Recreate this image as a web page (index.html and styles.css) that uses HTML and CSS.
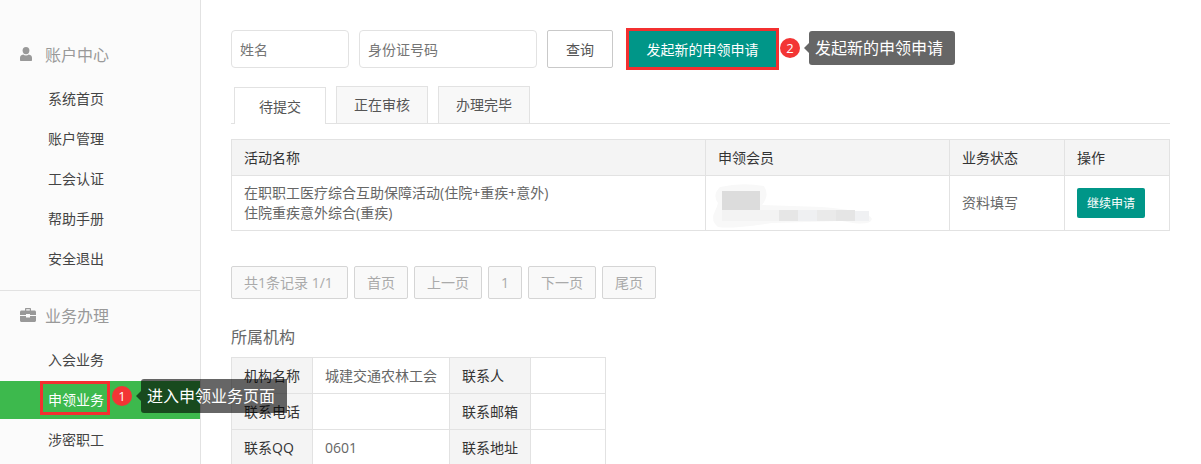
FILE: index.html
```html
<!DOCTYPE html>
<html lang="en">
<head>
    <meta charset="UTF-8">
    <title>申领业务</title>
    <link rel="stylesheet" href="styles.css">
</head>
<body>
    <div class="page">
        <!-- Sidebar -->
        <aside class="sidebar">
            <section class="side-group">
                <h3 class="side-title">
                    <svg class="side-icon icon-user" viewBox="0 0 12 14"><ellipse cx="6" cy="3.600" rx="3.400" ry="3.600"/><path d="M1 14c-.7 0-1-.4-1-1v-2.300C0 9 1.400 8.100 3.200 7.600 4.500 8.800 7.500 8.800 8.800 7.600 10.600 8.100 12 9 12 10.700V13c0 .6-.3 1-1 1z"/></svg>
                    账户中心
                </h3>
                <ul class="side-list">
                    <li>系统首页</li>
                    <li>账户管理</li>
                    <li>工会认证</li>
                    <li>帮助手册</li>
                    <li>安全退出</li>
                </ul>
            </section>
            <section class="side-group second">
                <h3 class="side-title">
                    <svg class="side-icon icon-case" viewBox="0 0 16 14"><path d="M5 2.500V1c0-.6.400-1 1-1h4c.6 0 1 .4 1 1v1.500h3.500c.8 0 1.500.7 1.500 1.500v3H10V6H6v1H0V4c0-.8.700-1.500 1.500-1.500zm1.200 0h3.600V1.200H6.200zM0 8h6v1.500h4V8h6v4.500c0 .8-.7 1.500-1.500 1.500h-13C.7 14 0 13.300 0 12.500z"/></svg>
                    业务办理
                </h3>
                <ul class="side-list">
                    <li>入会业务</li>
                    <li class="active">
                        <span class="marked">申领业务</span>
                        <span class="badge badge-one">1</span>
                        <span class="tip tip-one">进入申领业务页面</span>
                    </li>
                    <li>涉密职工</li>
                </ul>
            </section>
        </aside>

        <!-- Main content -->
        <main class="content">
            <div class="search-row">
                <input class="field name-field" type="text" placeholder="姓名">
                <input class="field id-field" type="text" placeholder="身份证号码">
                <button class="btn">查询</button>
                <div class="new-wrap">
                    <button class="btn-new">发起新的申领申请</button>
                    <span class="badge badge-two">2</span>
                    <span class="tip tip-two">发起新的申领申请</span>
                </div>
            </div>

            <ul class="tabs">
                <li class="tab current">待提交</li>
                <li class="tab">正在审核</li>
                <li class="tab">办理完毕</li>
            </ul>

            <table class="grid apply-table">
                <thead>
                    <tr>
                        <th class="col-name">活动名称</th>
                        <th class="col-member">申领会员</th>
                        <th class="col-state">业务状态</th>
                        <th>操作</th>
                    </tr>
                </thead>
                <tbody>
                    <tr>
                        <td>在职职工医疗综合互助保障活动(住院+重疾+意外)<br>住院重疾意外综合(重疾)</td>
                        <td class="member-cell">
                            <!-- blurred out name -->
                            <svg class="smudge" width="162" height="46" viewBox="0 0 162 46">
                                <path d="M8 4 Q30 -1 52 3 Q58 12 50 22 L110 24 Q158 28 160 36 Q158 44 130 38 L60 40 Q20 46 6 44 Q-2 38 3 28 Q5 24 6 20 Q0 12 8 4z" fill="#f8f8f8"/>
                                <rect x="10" y="8" width="38" height="19" fill="#dcdcdc"/>
                                <rect x="10" y="27" width="57" height="11" fill="#f3f3f3"/>
                                <rect x="67" y="27" width="19" height="11" fill="#e6e6e6"/>
                                <rect x="86" y="27" width="19" height="11" fill="#eff0f2"/>
                                <rect x="105" y="27" width="19" height="11" fill="#eaeaea"/>
                                <rect x="124" y="27" width="19" height="11" fill="#e5e5e5"/>
                                <rect x="143" y="28" width="14" height="10" fill="#f0f1f3"/>
                            </svg>
                        </td>
                        <td>资料填写</td>
                        <td><button class="btn-small">继续申请</button></td>
                    </tr>
                </tbody>
            </table>

            <div class="pager">
                <span class="page-btn page-count">共1条记录 1/1</span>
                <span class="page-btn">首页</span>
                <span class="page-btn">上一页</span>
                <span class="page-btn">1</span>
                <span class="page-btn">下一页</span>
                <span class="page-btn">尾页</span>
            </div>

            <h4 class="org-title">所属机构</h4>
            <table class="grid org-table">
                <tbody>
                    <tr>
                        <th>机构名称</th>
                        <td>城建交通农林工会</td>
                        <th>联系人</th>
                        <td></td>
                    </tr>
                    <tr>
                        <th>联系电话</th>
                        <td></td>
                        <th>联系邮箱</th>
                        <td></td>
                    </tr>
                    <tr>
                        <th>联系QQ</th>
                        <td>0601</td>
                        <th>联系地址</th>
                        <td></td>
                    </tr>
                </tbody>
            </table>
        </main>
    </div>
</body>
</html>
```

FILE: styles.css
```css
/* General Reset */
* {
    margin: 0;
    padding: 0;
    box-sizing: border-box;
}

html, body {
    height: 464px;
    overflow: hidden;
}

body {
    font-family: "Open Sans", "Noto Sans CJK SC", sans-serif;
    font-size: 14px;
    color: #666;
    background-color: #fff;
}

ul {
    list-style: none;
}

.page {
    display: flex;
    height: 100%;
}

/* Sidebar */
.sidebar {
    width: 201px;
    flex-shrink: 0;
    padding-top: 34px;
    background-color: #fbfbfb;
    border-right: 1px solid #e2e2e2;
    position: relative;
    z-index: 2;
}

.side-group.second {
    margin-top: 12px;
    padding-top: 4px;
    border-top: 1px solid #e2e2e2;
}

.side-title {
    display: flex;
    align-items: center;
    height: 40px;
    padding-left: 20px;
    font-size: 16px;
    font-weight: normal;
    color: #999;
}

.side-icon {
    flex-shrink: 0;
    fill: #999;
}

.icon-user {
    width: 12px;
    height: 14px;
    margin-right: 13px;
}

.icon-case {
    width: 16px;
    height: 14px;
    margin-right: 9px;
}

.side-list {
    display: flex;
    flex-direction: column;
    gap: 2px;
    padding-top: 6px;
}

.side-list li {
    height: 38px;
    line-height: 38px;
    padding-left: 48px;
    color: #444;
    position: relative;
}

.side-list li.active {
    background-color: #3db94d;
    color: #fff;
}

.marked {
    display: inline-block;
    height: 28px;
    line-height: 32px;
    margin-top: 3px;
    margin-left: -5px;
    padding: 0 3px 0 5px;
    outline: 3px solid #f33030;
    vertical-align: top;
}

/* Step badges and tips */
.badge {
    position: absolute;
    width: 20px;
    height: 20px;
    line-height: 20px;
    border-radius: 50%;
    text-align: center;
    font-size: 13px;
    color: #fff;
    background-color: #f33535;
}

.badge-one {
    left: 112px;
    top: 5px;
}

.badge-two {
    left: 151px;
    top: 8px;
}

.tip {
    position: absolute;
    height: 34px;
    line-height: 34px;
    padding: 0 12px 0 6px;
    border-radius: 3px;
    font-size: 16px;
    color: #fff;
    white-space: nowrap;
    background-color: rgba(0, 0, 0, 0.6);
}

.tip::before {
    content: '';
    position: absolute;
    left: -5px;
    top: 12px;
    border-style: solid;
    border-width: 5px 5px 5px 0;
    border-color: transparent rgba(0, 0, 0, 0.6) transparent transparent;
}

.tip-one {
    left: 141px;
    top: -2px;
    border-radius: 3px 0 0 3px;
}

.tip-two {
    left: 180px;
    top: 1px;
}

/* Main content */
.content {
    flex: 1;
    min-width: 0;
    padding: 30px 31px 0 30px;
}

.search-row {
    display: flex;
    gap: 10px;
    height: 38px;
}

.field {
    height: 38px;
    padding-left: 8px;
    border: 1px solid #e2e2e2;
    border-radius: 4px;
    font-family: inherit;
    font-size: 14px;
    background-color: #fff;
}

.field::placeholder {
    color: #757575;
}

.name-field {
    width: 118px;
}

.id-field {
    width: 178px;
}

.btn {
    width: 66px;
    height: 38px;
    border: 1px solid #c9c9c9;
    border-radius: 2px;
    font-family: inherit;
    font-size: 14px;
    color: #555;
    background-color: #fff;
}

.new-wrap {
    position: relative;
    margin-left: 6px;
    padding: 1px 0;
}

.btn-new {
    display: block;
    width: 147px;
    height: 36px;
    border: none;
    outline: 3px solid #f33030;
    font-family: inherit;
    font-size: 14px;
    color: #fff;
    background-color: #009688;
}

/* Tabs */
.tabs {
    display: flex;
    gap: 10px;
    height: 38px;
    margin-top: 18px;
    padding-left: 3px;
    border-bottom: 1px solid #e2e2e2;
}

.tab {
    width: 92px;
    height: 37px;
    line-height: 36px;
    text-align: center;
    color: #555;
    background-color: #f8f8f8;
    border: 1px solid #e2e2e2;
    border-bottom: none;
}

.tab.current {
    margin-top: 1px;
    padding-top: 1px;
    background-color: #fff;
}

/* Tables */
.grid {
    border-collapse: collapse;
    table-layout: fixed;
}

.grid th, .grid td {
    border: 1px solid #e2e2e2;
    text-align: left;
    font-weight: normal;
    line-height: 20px;
    padding: 0 12px;
}

.grid th {
    color: #333;
    background-color: #f4f4f4;
}

.apply-table {
    width: 939px;
    margin-top: 15px;
}

.apply-table thead th {
    height: 36px;
}

.apply-table tbody td {
    height: 55px;
}

.col-name {
    width: 474px;
}

.col-member {
    width: 244px;
}

.col-state {
    width: 115px;
}

.member-cell {
    position: relative;
}

.smudge {
    position: absolute;
    left: 6px;
    top: 7px;
}

.btn-small {
    width: 68px;
    height: 30px;
    border: none;
    border-radius: 2px;
    font-family: inherit;
    font-size: 12px;
    color: #fff;
    background-color: #009688;
}

/* Pager */
.pager {
    display: flex;
    gap: 6px;
    margin-top: 35px;
}

.page-btn {
    height: 33px;
    line-height: 31px;
    padding: 0 12px;
    color: #aaa;
    background-color: #f9f9f9;
    border: 1px solid #d5d5d5;
    border-radius: 2px;
    white-space: nowrap;
}

.page-count {
    width: 117px;
}

/* Organisation info */
.org-title {
    margin-top: 27px;
    font-size: 16px;
    font-weight: normal;
    line-height: 22px;
    color: #666;
}

.org-table {
    width: 374px;
    margin-top: 9px;
}

.org-table th, .org-table td {
    height: 36px;
}

.org-table th:nth-child(1), .org-table th:nth-child(3) {
    width: 81px;
}

.org-table td:nth-child(2) {
    width: 137px;
}

.org-table td:nth-child(4) {
    width: 75px;
}
```
